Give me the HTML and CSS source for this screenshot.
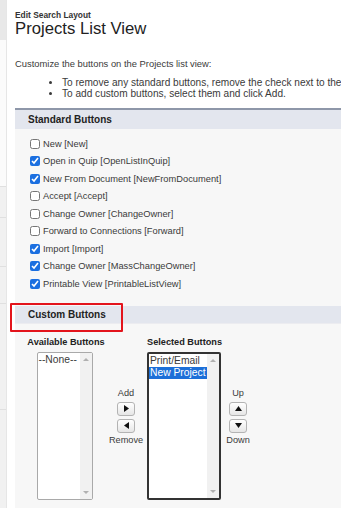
FILE: index.html
```html
<!DOCTYPE html>
<html lang="en">
<head>
    <meta charset="UTF-8">
    <title>Projects List View</title>
    <link rel="stylesheet" href="styles.css">
</head>
<body>
    <div class="page">
        <!-- Left nav strip (cut off) -->
        <div class="sidebar">
            <div class="side-top"></div>
            <div class="side-blank"></div>
            <div class="side-row" style="height: 30px"></div>
            <div class="side-row" style="height: 49px"></div>
            <div class="side-row" style="height: 36px"></div>
            <div class="side-row" style="height: 106px"></div>
            <div class="side-row" style="height: 99px"></div>
        </div>

        <div class="main">
            <div class="crumb">Edit Search Layout</div>
            <h1>Projects List View</h1>

            <p class="intro">Customize the buttons on the Projects list view:</p>
            <ul class="tips">
                <li>To remove any standard buttons, remove the check next to the</li>
                <li>To add custom buttons, select them and click Add.</li>
            </ul>

            <div class="section">
                <div class="section-head first">Standard Buttons</div>
                <div class="checks">
                    <label class="check"><input type="checkbox"> New [New]</label>
                    <label class="check"><input type="checkbox" checked> Open in Quip [OpenListInQuip]</label>
                    <label class="check"><input type="checkbox" checked> New From Document [NewFromDocument]</label>
                    <label class="check"><input type="checkbox"> Accept [Accept]</label>
                    <label class="check"><input type="checkbox"> Change Owner [ChangeOwner]</label>
                    <label class="check"><input type="checkbox"> Forward to Connections [Forward]</label>
                    <label class="check"><input type="checkbox" checked> Import [Import]</label>
                    <label class="check"><input type="checkbox" checked> Change Owner [MassChangeOwner]</label>
                    <label class="check"><input type="checkbox" checked> Printable View [PrintableListView]</label>
                </div>

                <div class="section-head custom">
                    Custom Buttons
                    <div class="highlight"></div>
                </div>

                <div class="duel">
                    <div class="pick-col avail">
                        <div class="pick-label">Available Buttons</div>
                        <div class="listbox">
                            <div class="options">
                                <div class="opt">--None--</div>
                            </div>
                            <div class="scroll"><span class="arr up"></span><span class="arr down"></span></div>
                        </div>
                    </div>

                    <div class="ctrl">
                        <div class="ctrl-label">Add</div>
                        <button class="arrow-btn"><svg width="5" height="7" viewBox="0 0 5 7"><path d="M0 0 L5 3.5 L0 7 Z" fill="#111"/></svg></button>
                        <button class="arrow-btn"><svg width="5" height="7" viewBox="0 0 5 7"><path d="M5 0 L0 3.5 L5 7 Z" fill="#111"/></svg></button>
                        <div class="ctrl-label">Remove</div>
                    </div>

                    <div class="pick-col sel">
                        <div class="pick-label">Selected Buttons</div>
                        <div class="listbox focused">
                            <div class="options">
                                <div class="opt">Print/Email</div>
                                <div class="opt picked">New Project</div>
                            </div>
                            <div class="scroll"><span class="arr up"></span><span class="arr down"></span></div>
                        </div>
                    </div>

                    <div class="ctrl order">
                        <div class="ctrl-label">Up</div>
                        <button class="arrow-btn"><svg width="7" height="5" viewBox="0 0 7 5"><path d="M0 5 L3.5 0 L7 5 Z" fill="#111"/></svg></button>
                        <button class="arrow-btn"><svg width="7" height="5" viewBox="0 0 7 5"><path d="M0 0 L3.5 5 L7 0 Z" fill="#111"/></svg></button>
                        <div class="ctrl-label">Down</div>
                    </div>
                </div>
            </div>
        </div>
    </div>
</body>
</html>
```

FILE: styles.css
```css
body {
    margin: 0;
    font-family: "Liberation Sans", Arial, sans-serif;
    color: #3a3a3a;
    background-color: white;
    overflow: hidden;
}

.page {
    display: flex;
    height: 508px;
}

/* cut-off nav on the left */
.sidebar {
    width: 6px;
    flex-shrink: 0;
    border-right: 1px solid #e6e6e6;
    display: flex;
    flex-direction: column;
}

.side-top {
    height: 40px;
    background-color: #e8e8e8;
}

.side-blank {
    height: 148px;
    background-color: #fbfbfb;
}

.side-row {
    background-color: #f1f1f1;
    border-top: 1px solid #e0e0e0;
}

.main {
    flex: 1;
    padding-left: 8px;
    min-width: 0;
}

.crumb {
    margin-top: 10px;
    font-size: 8.4px;
    font-weight: bold;
    color: #333;
}

h1 {
    margin: -1px 0 0 0;
    font-size: 16.7px;
    font-weight: normal;
    color: #222;
    line-height: 20px;
}

.intro {
    margin: 19px 0 0 0;
    font-size: 9.4px;
    line-height: 11px;
    white-space: nowrap;
}

.tips {
    margin: 9px 0 0 0;
    padding-left: 47px;
    font-size: 10.1px;
    line-height: 10.5px;
    white-space: nowrap;
}

.section {
    margin-top: 9px;
    width: 340px;
    background-color: #f7f7f7;
    height: 400px;
}

.section-head {
    position: relative;
    background-color: #e3e6ee;
    font-size: 10px;
    font-weight: bold;
    color: #222;
    padding-left: 13px;
}

.section-head.first {
    border-top: 2px solid #8e97a9;
    height: 19px;
    line-height: 19px;
}

.section-head.custom {
    margin-top: 13px;
    height: 17px;
    line-height: 17px;
    border-bottom: 1px solid #ececf0;
}

/* red annotation box */
.highlight {
    position: absolute;
    left: -5px;
    top: -3px;
    width: 109px;
    height: 25px;
    border: 2px solid #e3141c;
    border-radius: 1px;
}

.checks {
    padding: 6px 0 0 15px;
}

.check {
    display: flex;
    align-items: center;
    height: 17.5px;
    font-size: 9.3px;
    white-space: nowrap;
}

.check input {
    width: 10px;
    height: 10px;
    margin: 0 3px 0 0;
    accent-color: #1b6fe0;
}

.duel {
    display: flex;
    align-items: flex-start;
    padding: 13px 0 0 12px;
}

.pick-col {
    display: flex;
    flex-direction: column;
    align-items: center;
}

.pick-col.avail {
    width: 78px;
}

.pick-col.sel {
    width: 75px;
    align-items: flex-start;
}

.pick-label {
    font-size: 9.2px;
    font-weight: bold;
    color: #222;
    white-space: nowrap;
    line-height: 11px;
}

.listbox {
    display: flex;
    margin-top: 4px;
    width: 54px;
    height: 146px;
    border: 1px solid #a9a9a9;
    border-radius: 2px;
    background-color: white;
}

.avail .listbox {
    margin-left: -3px;
}

.listbox.focused {
    width: 70px;
    border: 2px solid #333;
    height: 144px;
}

.options {
    flex: 1;
    padding-top: 1px;
    font-size: 10.3px;
    line-height: 12px;
    white-space: nowrap;
    overflow: hidden;
}

.opt {
    padding-left: 1px;
}

.opt.picked {
    background-color: #1c6fd8;
    color: white;
}

.scroll {
    position: relative;
    width: 12px;
    background-color: #f1f1f1;
}

.arr {
    position: absolute;
    left: 3px;
    width: 0;
    height: 0;
    border-left: 3px solid transparent;
    border-right: 3px solid transparent;
}

.arr.up {
    top: 5px;
    border-bottom: 3px solid #b0b0b0;
}

.arr.down {
    bottom: 5px;
    border-top: 3px solid #b0b0b0;
}

.ctrl {
    width: 42px;
    margin-top: 51px;
    display: flex;
    flex-direction: column;
    align-items: center;
}

.ctrl.order {
    width: 32px;
}

.ctrl-label {
    font-size: 9.2px;
    line-height: 11px;
    white-space: nowrap;
}

.arrow-btn {
    width: 18px;
    height: 14px;
    margin-top: 3px;
    padding: 0;
    display: flex;
    align-items: center;
    justify-content: center;
    border: 1px solid #b3b3b3;
    border-radius: 3px;
    background: linear-gradient(#ffffff, #e6e6e6);
}

.arrow-btn + .arrow-btn {
    margin-top: 3px;
}

.arrow-btn + .ctrl-label {
    margin-top: 2px;
}
```
